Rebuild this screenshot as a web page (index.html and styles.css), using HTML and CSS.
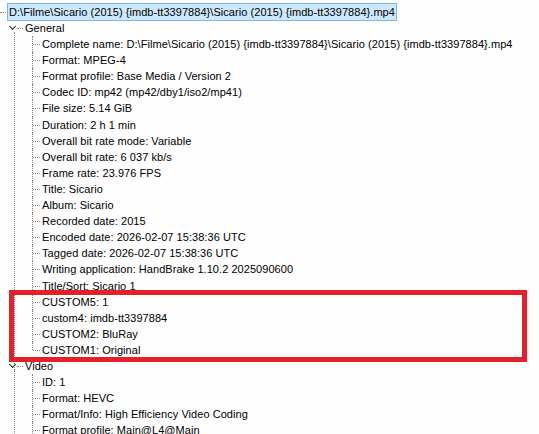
FILE: index.html
```html
<!DOCTYPE html>
<html lang="en">
<head>
  <meta charset="UTF-8">
  <title>MediaInfo - Tree</title>
  <link rel="stylesheet" href="styles.css">
</head>
<body>
  <div class="tree">
    <div class="root"><span class="path">D:\Filme\Sicario (2015) {imdb-tt3397884}\Sicario (2015) {imdb-tt3397884}.mp4</span></div>
    <ul class="sections">
      <li class="section">
        <div class="node">
          <span class="chev"></span>
          <span class="label">General</span>
        </div>
        <ul class="fields">
          <li>Complete name: D:\Filme\Sicario (2015) {imdb-tt3397884}\Sicario (2015) {imdb-tt3397884}.mp4</li>
          <li>Format: MPEG-4</li>
          <li>Format profile: Base Media / Version 2</li>
          <li>Codec ID: mp42 (mp42/dby1/iso2/mp41)</li>
          <li>File size: 5.14 GiB</li>
          <li>Duration: 2 h 1 min</li>
          <li>Overall bit rate mode: Variable</li>
          <li>Overall bit rate: 6 037 kb/s</li>
          <li>Frame rate: 23.976 FPS</li>
          <li>Title: Sicario</li>
          <li>Album: Sicario</li>
          <li>Recorded date: 2015</li>
          <li>Encoded date: 2026-02-07 15:38:36 UTC</li>
          <li>Tagged date: 2026-02-07 15:38:36 UTC</li>
          <li>Writing application: HandBrake 1.10.2 2025090600</li>
          <li>Title/Sort: Sicario 1</li>
          <li>CUSTOM5: 1</li>
          <li>custom4: imdb-tt3397884</li>
          <li>CUSTOM2: BluRay</li>
          <li>CUSTOM1: Original</li>
        </ul>
      </li>
      <li class="section">
        <div class="node">
          <span class="chev"></span>
          <span class="label">Video</span>
        </div>
        <ul class="fields open">
          <li>ID: 1</li>
          <li>Format: HEVC</li>
          <li>Format/Info: High Efficiency Video Coding</li>
          <li>Format profile: Main@L4@Main</li>
        </ul>
      </li>
    </ul>
    <div class="highlight"></div>
  </div>
</body>
</html>
```

FILE: styles.css
```css
html, body {
  margin: 0;
  padding: 0;
  height: 100%;
  overflow: hidden;
  background: #fefefe;
}
body {
  font-family: "Liberation Sans", Arial, sans-serif;
  font-size: 11px;
  letter-spacing: 0.05px;
  color: #000;
}
.tree {
  position: relative;
  padding-top: 3px;
}
ul {
  list-style: none;
  margin: 0;
  padding: 0;
}
.root {
  position: relative;
  height: 18px;
  margin-bottom: -1px;
  padding-left: 7px;
}
.root::before {
  content: "";
  position: absolute;
  left: 0;
  top: 9px;
  width: 6px;
  border-top: 1px dotted #888;
}
.path {
  display: inline-block;
  height: 16px;
  line-height: 16px;
  padding: 0 1px;
  background: #cce8ff;
  border: 1px solid #7fb6e8;
  white-space: nowrap;
}
.section {
  position: relative;
}
.section::before {
  content: "";
  position: absolute;
  left: 14px;
  top: 12px;
  bottom: -40px;
  border-left: 1px dotted #888;
}
.node {
  position: relative;
  height: 16.1px;
  line-height: 16px;
  padding-left: 25px;
}
.node::before {
  content: "";
  position: absolute;
  left: 17px;
  top: 8px;
  width: 6px;
  border-top: 1px dotted #888;
}
.chev {
  position: absolute;
  left: 10px;
  top: 4px;
  width: 4px;
  height: 4px;
  border-right: 1.5px solid #222;
  border-bottom: 1.5px solid #222;
  transform: rotate(45deg);
}
.fields li {
  position: relative;
  height: 16.1px;
  line-height: 16px;
  padding-left: 42px;
  white-space: nowrap;
}
.fields li::before {
  content: "";
  position: absolute;
  left: 33px;
  top: 8px;
  width: 7px;
  border-top: 1px dotted #888;
}
.fields li::after {
  content: "";
  position: absolute;
  left: 32px;
  top: 0;
  bottom: 0;
  border-left: 1px dotted #888;
}
.fields li:last-child::after {
  bottom: 8px;
}
.fields.open li:last-child::after {
  bottom: 0;
}
.highlight {
  position: absolute;
  left: 9px;
  top: 290px;
  width: 518px;
  height: 72px;
  box-sizing: border-box;
  border: 5px solid #e5202a;
}
```
